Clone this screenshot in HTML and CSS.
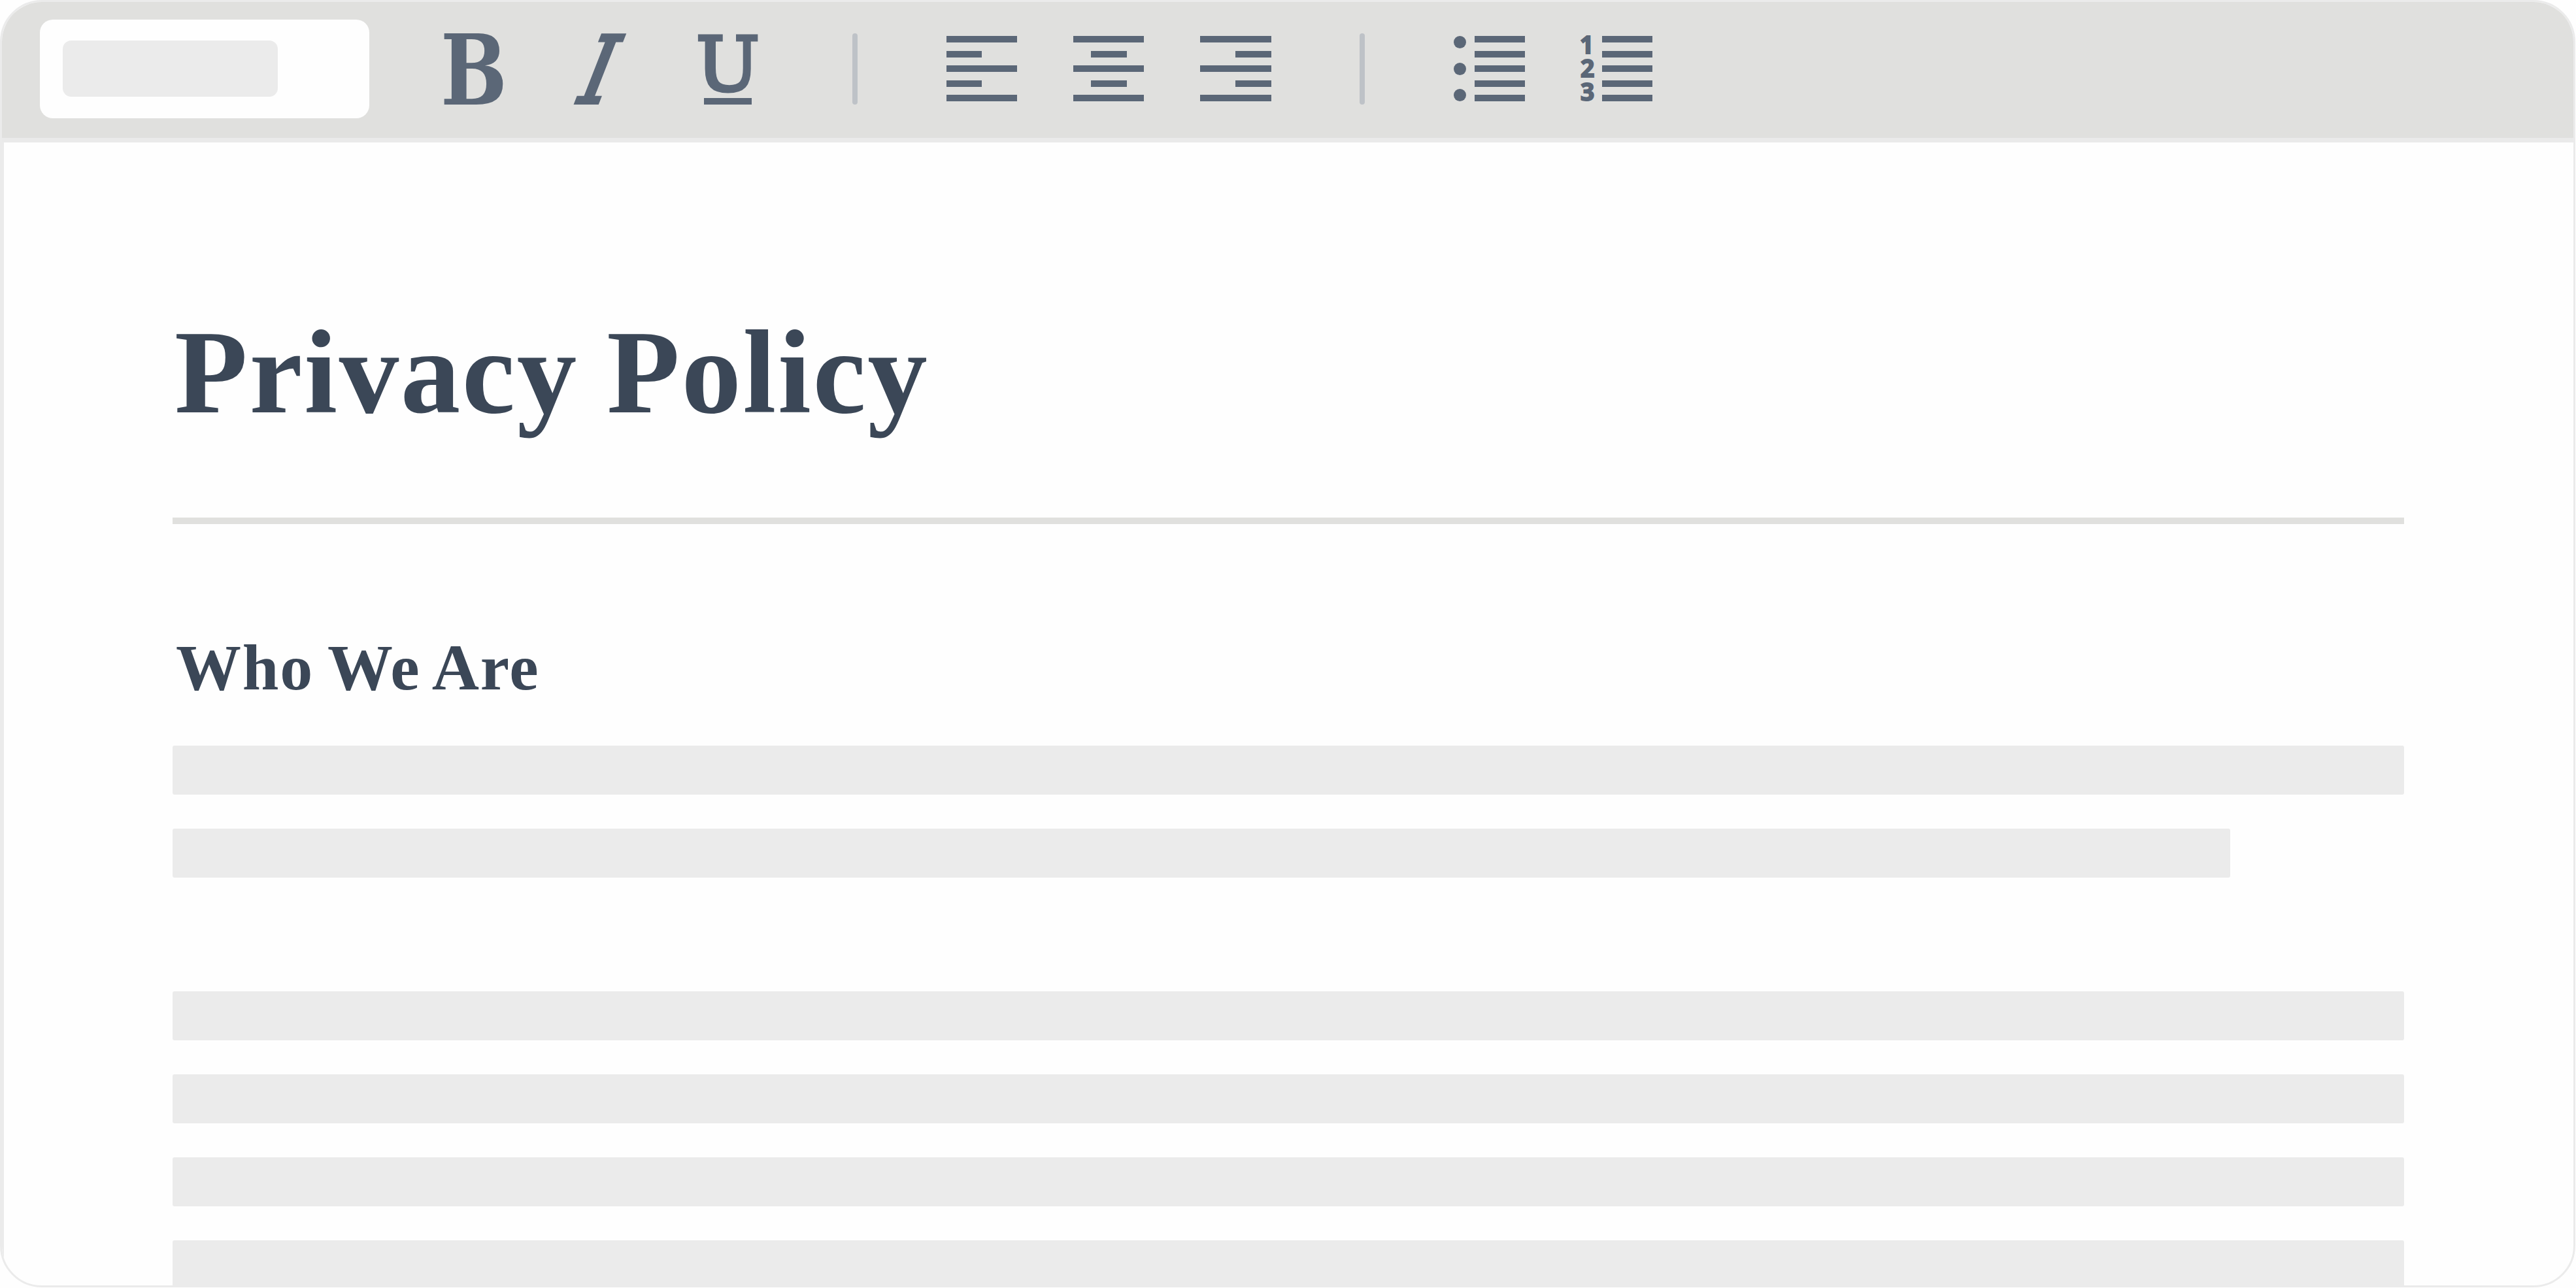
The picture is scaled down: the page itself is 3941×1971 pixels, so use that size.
FILE: index.html
```html
<!DOCTYPE html>
<html lang="en">
<head>
    <meta charset="UTF-8">
    <meta name="viewport" content="width=device-width, initial-scale=1.0">
    <title>Privacy Policy</title>
    <link rel="stylesheet" href="styles.css">
</head>
<body>
    <div class="editor">
        <div class="toolbar">
            <div class="style-select">
                <div class="style-value"></div>
            </div>
            <div class="tools text-tools">
                <svg class="icon" width="108" height="110" viewBox="0 0 108 110">
                    <text class="letter bold" x="2" y="109" textLength="102" lengthAdjust="spacingAndGlyphs">B</text>
                </svg>
                <svg class="icon" width="108" height="110" viewBox="0 0 108 110">
                    <text class="letter italic" transform="translate(17 106) skewX(-13)" textLength="46" lengthAdjust="spacingAndGlyphs">I</text>
                </svg>
                <svg class="icon" width="108" height="110" viewBox="0 0 108 110">
                    <text class="letter underline" x="5" y="87" textLength="97" lengthAdjust="spacingAndGlyphs">U</text>
                    <rect x="17" y="99" width="73" height="10"/>
                </svg>
            </div>
            <div class="divider"></div>
            <div class="tools align-tools">
                <svg class="icon" width="108" height="110" viewBox="0 0 108 110">
                    <path d="M0 4h108v10H0zM0 27h54v10H0zM0 49h108v10H0zM0 72h54v10H0zM0 94h108v10H0z"/>
                </svg>
                <svg class="icon" width="108" height="110" viewBox="0 0 108 110">
                    <path d="M0 4h108v10H0zM27 27h55v10H27zM0 49h108v10H0zM27 72h55v10H27zM0 94h108v10H0z"/>
                </svg>
                <svg class="icon" width="109" height="110" viewBox="0 0 109 110">
                    <path d="M0 4h109v10H0zM54 27h55v10H54zM0 49h109v10H0zM54 72h55v10H54zM0 94h109v10H0z"/>
                </svg>
            </div>
            <div class="divider"></div>
            <div class="tools list-tools">
                <svg class="icon" width="109" height="110" viewBox="0 0 109 110">
                    <circle cx="9.5" cy="13.5" r="9.5"/>
                    <circle cx="9.5" cy="54.5" r="9.5"/>
                    <circle cx="9.5" cy="94.5" r="9.5"/>
                    <path d="M32 4h77v10H32zM32 27h77v10H32zM32 49h77v10H32zM32 72h77v10H32zM32 94h77v10H32z"/>
                </svg>
                <svg class="icon" width="109" height="110" viewBox="0 0 109 110">
                    <text class="number" x="-2" y="31">1</text>
                    <text class="number" x="-1" y="67">2</text>
                    <text class="number" x="-1" y="103">3</text>
                    <path d="M32 4h77v10H32zM32 27h77v10H32zM32 49h77v10H32zM32 72h77v10H32zM32 94h77v10H32z"/>
                </svg>
            </div>
        </div>
        <div class="document">
            <h1>Privacy Policy</h1>
            <hr>
            <h2>Who We Are</h2>
            <div class="paragraph">
                <div class="line"></div>
                <div class="line short"></div>
            </div>
            <div class="paragraph">
                <div class="line"></div>
                <div class="line"></div>
                <div class="line"></div>
                <div class="line"></div>
            </div>
        </div>
    </div>
</body>
</html>
```
FILE: styles.css
```css
* {
    box-sizing: border-box;
}
body {
    margin: 0;
    background-color: #fefefe;
    overflow: hidden;
}
.editor {
    width: 3940px;
    height: 1970px;
    border: 3px solid #ebebeb;
    border-radius: 64px;
    overflow: hidden;
    display: flex;
    flex-direction: column;
}
.toolbar {
    flex: none;
    height: 215px;
    padding: 27px 58px 0;
    background-color: #e0e0de;
    border-bottom: 7px solid #eaeaea;
    display: flex;
    align-items: flex-start;
}
.style-select {
    width: 504px;
    height: 151px;
    padding: 32px 35px;
    background-color: #fefefe;
    border-radius: 20px;
}
.style-value {
    width: 329px;
    height: 86px;
    background-color: #ebebeb;
    border-radius: 13px;
}
.tools {
    display: flex;
    gap: 86px;
    margin-top: 21px;
}
.text-tools {
    margin-left: 107px;
}
.align-tools {
    margin-left: 136px;
}
.list-tools {
    margin-left: 136px;
}
.divider {
    width: 8px;
    height: 109px;
    margin: 21px 0 0 135px;
    background-color: #bec2c7;
    border-radius: 4px;
}
.text-tools + .divider {
    margin-left: 136px;
}
.icon {
    display: block;
    fill: #5b6777;
    overflow: visible;
}
.letter {
    font-family: "DejaVu Serif", serif;
    font-size: 149.5px;
}
.bold {
    font-weight: bold;
}
.italic {
    font-size: 141px;
    font-style: italic;
    stroke: #5b6777;
    stroke-width: 6px;
}
.underline {
    font-size: 115px;
    stroke: #5b6777;
    stroke-width: 5px;
}
.number {
    font-family: "Noto Sans", sans-serif;
    font-size: 37px;
    font-weight: bold;
    stroke: #5b6777;
    stroke-width: 2px;
}
.document {
    flex: 1;
    padding: 248px 259px 0 258px;
    border-left: 3px solid #ebebeb;
    overflow: hidden;
}
h1, h2 {
    margin: 0;
    font-family: "Liberation Serif", serif;
    font-weight: bold;
    color: #3b4757;
    white-space: nowrap;
}
h1 {
    margin-top: -6px;
    padding-left: 3px;
    font-size: 183px;
    line-height: 220px;
    letter-spacing: 2.6px;
    word-spacing: -5px;
}
hr {
    height: 10px;
    margin: 112px 0 0;
    border: none;
    background-color: #e0e0de;
}
h2 {
    margin-top: 160px;
    padding-left: 5px;
    font-size: 100px;
    line-height: 120px;
    letter-spacing: 1.8px;
    word-spacing: -4px;
}
.paragraph {
    display: flex;
    flex-direction: column;
    gap: 52px;
    margin-top: 59px;
}
.paragraph + .paragraph {
    margin-top: 174px;
}
.line {
    height: 75px;
    background-color: #ebebeb;
    border-radius: 3px;
}
.line.short {
    width: 3148px;
}
```
